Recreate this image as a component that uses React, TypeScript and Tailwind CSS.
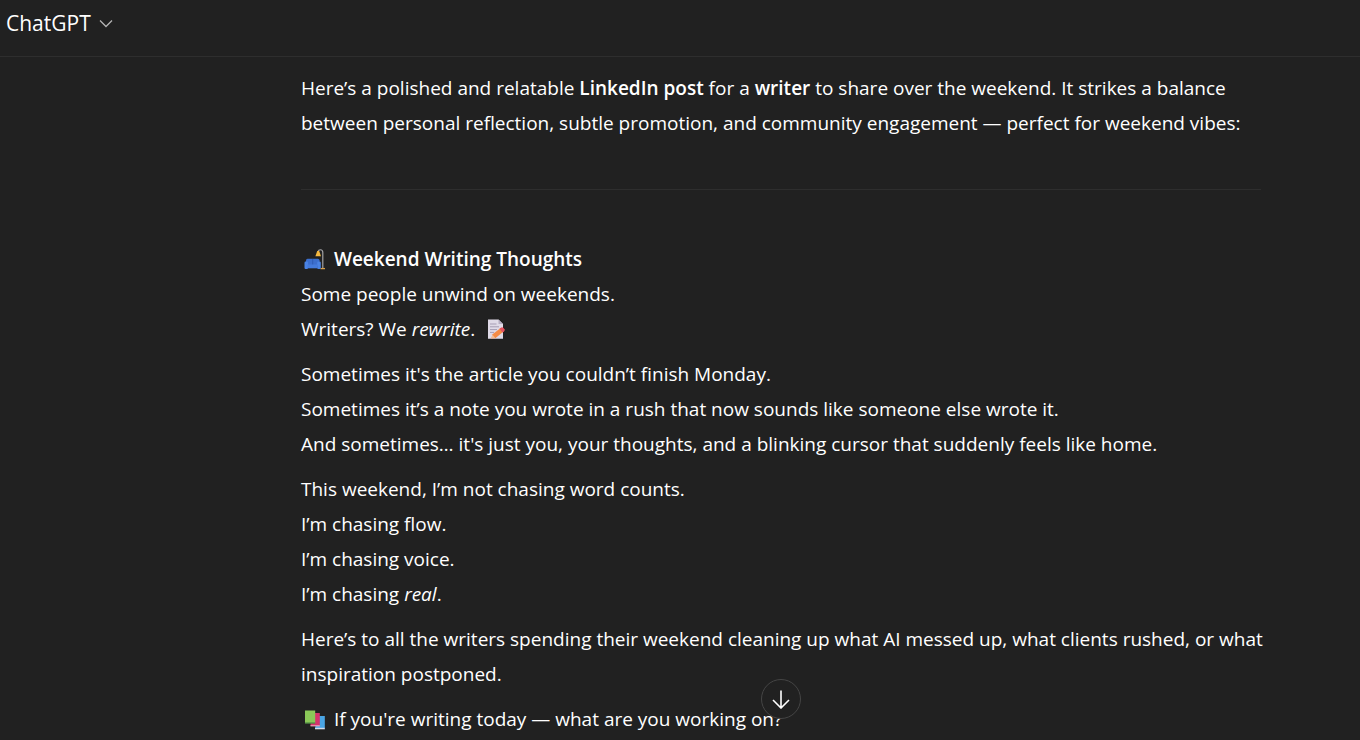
import type { ReactNode } from 'react'

const Emoji = ({ label, children }: { label: string; children: ReactNode }) => (
  <svg role="img" aria-label={label} viewBox="0 1 28 28" className="inline-block h-7 w-7 align-middle">
    {children}
  </svg>
)

const CouchLamp = () => (
  <Emoji label="couch and lamp">
    <path d="M21.800 22.500V6.500c0-3.600-4.600-3.600-4.600-.500" fill="none" stroke="#a3a3a6" strokeWidth="1.200" />
    <path d="M19.500 22.600h4.500" stroke="#d9a04a" strokeWidth="1.300" />
    <path d="M16.200 5h2l1.800 5.200h-5.600z" fill="#f5b93f" />
    <path d="M5 14.300q0-1.500 1.500-1.500h10.500q1.500 0 1.500 1.500V20H5z" fill="#3c6fce" />
    <path d="M11.700 13v6" stroke="#2a54aa" strokeWidth=".7" />
    <rect x="3.500" y="15.500" width="3.600" height="7.500" rx="1.200" fill="#4a83e4" />
    <rect x="16.200" y="15.500" width="3.600" height="7.500" rx="1.200" fill="#4a83e4" />
    <rect x="6.500" y="18.500" width="10.300" height="3.800" fill="#447bdc" />
  </Emoji>
)

const Memo = () => (
  <Emoji label="memo">
    <path d="M8 3.500h10.500l4.500 4.500v14.800H8z" fill="#dfdae7" />
    <path d="M18.500 3.500V8H23z" fill="#b5adc2" />
    <path d="M10 8h6.500M10 10.800h9M10 13.600h7M10 16.400h4" stroke="#a69db4" />
    <path d="M12.600 18.300l8-6.300 3 3.600-8 6.400-4.200.4z" fill="#f58b45" />
    <path d="M19.500 12.800l1.800-1.400q1-.6 1.900.4l1.300 1.500q.7 1-.3 1.900l-1.800 1.300z" fill="#e3525f" />
    <path d="M12.400 18.500l2.900 3.400-4.200.5z" fill="#f0bd98" />
  </Emoji>
)

const Books = () => (
  <Emoji label="books">
    <path d="M17 10h6.800v12.300H14z" fill="#4aa5e4" />
    <path d="M14 21.800h9.800v1.500H14z" fill="#d5dcea" />
    <path d="M13 7h5.800v13H9.500V17z" fill="#d6336c" />
    <path d="M9.500 19.200h9.300v1.200H9.500z" fill="#e9a7bb" />
    <path d="M4 4.500h10.200V17H4z" fill="#8bc858" />
    <path d="M4 16.400h10.200v1.300H4z" fill="#4f8a43" />
  </Emoji>
)

export default function App() {
  return (
    <div className="relative flex h-screen flex-col overflow-hidden bg-[#212121] font-['Segoe_UI','Open_Sans',sans-serif] text-white">
      <header className="flex h-[57px] shrink-0 items-center border-b border-[#2e2e2e] px-1.5 pb-2.5">
        <button type="button" className="flex items-center gap-2 text-[21px] leading-7">
          ChatGPT
          <svg viewBox="0 0 14 14" className="h-3.5 w-3.5" fill="none" stroke="#b4b4b4" strokeWidth="1.3" aria-hidden="true">
            <path d="M1 4.500l6 6 6-6" />
          </svg>
        </button>
      </header>

      <main className="min-h-0 flex-1 overflow-hidden pl-[202px]">
        <article className="mx-auto flex max-w-[960px] flex-col gap-2.5 pt-3.5 text-[19px] leading-[35px]">
          <p>
            Here’s a polished and relatable <strong className="font-semibold">LinkedIn post</strong> for a{' '}
            <strong className="font-semibold">writer</strong> to share over the weekend. It strikes a balance
            <br />
            between personal reflection, subtle promotion, and community engagement — perfect for weekend vibes:
          </p>
          <hr className="mt-[38px] mb-[42px] border-[#2e2e2e]" />
          <p>
            <CouchLamp /> <strong className="font-semibold">Weekend Writing Thoughts</strong>
            <br />
            Some people unwind on weekends.
            <br />
            Writers? We <em>rewrite</em>. <Memo />
          </p>
          <p>
            Sometimes it's the article you couldn’t finish Monday.
            <br />
            Sometimes it’s a note you wrote in a rush that now sounds like someone else wrote it.
            <br />
            And sometimes… it's just you, your thoughts, and a blinking cursor that suddenly feels like home.
          </p>
          <p>
            This weekend, I’m not chasing word counts.
            <br />
            I’m chasing flow.
            <br />
            I’m chasing voice.
            <br />
            I’m chasing <em>real</em>.
          </p>
          <p className="-mr-4">
            Here’s to all the writers spending their weekend cleaning up what AI messed up, what clients rushed, or what
            inspiration postponed.
          </p>
          <p>
            <Books /> If you're writing today — what are you working on?
          </p>
        </article>
      </main>

      <div className="pointer-events-none absolute inset-x-0 bottom-[21px] flex justify-center pl-[202px]">
        <button
          type="button"
          aria-label="Scroll to bottom"
          className="pointer-events-auto flex h-10 w-10 items-center justify-center rounded-full border border-[#454545] bg-[#212121]"
        >
          <svg viewBox="0 0 20 20" className="h-5 w-5" fill="none" stroke="white" strokeWidth="1.6" aria-hidden="true">
            <path d="M10 1.500v17M2 11l8 8 8-8" />
          </svg>
        </button>
      </div>
    </div>
  )
}
